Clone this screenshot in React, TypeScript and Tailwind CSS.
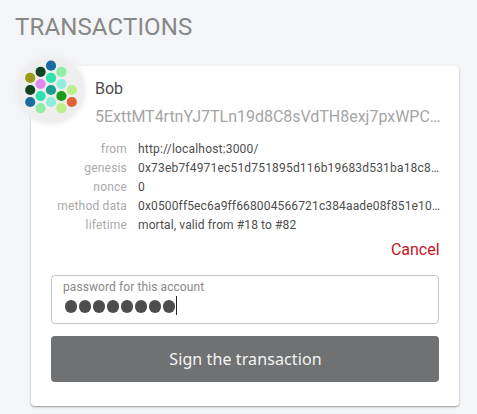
const dots: [number, number, string][] = [
  [33, 8.7, '#1a6b9f'],
  [22.6, 14.8, '#10421f'],
  [43.4, 14.8, '#91eda6'],
  [12.2, 20.9, '#9b9a19'],
  [33, 20.9, '#2fe2ad'],
  [22.6, 27, '#e08af0'],
  [43.4, 27, '#91eede'],
  [53.8, 33, '#bdf08b'],
  [12.2, 33, '#10421f'],
  [33, 33, '#1b9d90'],
  [22.6, 39, '#2fe2ad'],
  [43.4, 39, '#1a9c19'],
  [12.2, 45, '#1a6b9f'],
  [33, 45, '#91eede'],
  [53.8, 45, '#e26033'],
  [22.6, 51.2, '#91eda6'],
  [43.4, 51.2, '#bdf08b'],
];

const details = [
  ['from', 'http://localhost:3000/'],
  ['genesis', '0x73eb7f4971ec51d751895d116b19683d531ba18c8…'],
  ['nonce', '0'],
  ['method data', '0x0500ff5ec6a9ff668004566721c384aade08f851e10…'],
  ['lifetime', 'mortal, valid from #18 to #82'],
];

function Identicon() {
  return (
    <svg
      viewBox="0 0 66 66"
      className="absolute -left-[13px] -top-[9px] h-[66px] w-[66px] rounded-full bg-[#eeeeee] shadow-[0_0_5px_2px_#eeeeee]"
    >
      {dots.map(([x, y, color]) => (
        <circle key={`${x}-${y}`} cx={x} cy={y} r="5.1" fill={color} />
      ))}
    </svg>
  );
}

export default function App() {
  return (
    <main className="h-[414px] w-[477px] overflow-hidden bg-[#f4f5f8] pt-[11px] font-['Roboto',sans-serif] text-[#4d4d4d]">
      <h1 className="ml-[15px] h-[55px] text-[24px] leading-8 tracking-[0.14px] text-[#878786]">TRANSACTIONS</h1>
      <section className="relative ml-[31px] h-[340px] w-[428px] rounded-[4px] bg-white px-5 pt-[9px] shadow-[0_1px_2px_0_rgba(0,0,0,0.4)]">
        <Identicon />
        <header className="ml-11 whitespace-nowrap text-[16px]">
          <div className="h-7 leading-7">Bob</div>
          <div className="h-7 leading-7 tracking-[-0.02px] text-[#a5a5a5]">5ExttMT4rtnYJ7TLn19d8C8sVdTH8exj7pxWPC…</div>
        </header>
        <dl className="mt-[9px] grid grid-cols-[76px_1fr] gap-x-[11px] whitespace-nowrap text-[12px] leading-[19px]">
          {details.map(([label, value]) => (
            <div key={label} className="contents">
              <dt className="flex justify-end tracking-[0.18px] text-[#aaaaaa]">{label}</dt>
              <dd className={value.startsWith('0x73') ? 'tracking-[0.19px]' : value.startsWith('h') ? 'tracking-[0.18px]' : value.startsWith('0x') ? 'tracking-[0.15px]' : 'tracking-[0.11px]'}>
                {value}
              </dd>
            </div>
          ))}
        </dl>
        <div className="flex h-[40px] justify-end pt-[3px]">
          <button className="-mr-[0.6px] h-6 text-[16px] leading-6 text-[#c4161c]">Cancel</button>
        </div>
        <div className="h-[49px] rounded-[4px] border border-[#c6c6c6] pl-[11px] pt-[3px]">
          <div className="h-4 text-[12px] leading-4 tracking-[0.09px] text-[#898989]">password for this account</div>
          <div className="flex h-5 items-start">
            <div className="flex gap-[1.5px] pl-[1.7px] pt-[5px]">
              {Array.from({ length: 8 }, (_, i) => (
                <span key={i} className="h-[12.5px] w-[12.5px] rounded-full bg-[#4d4d4d]" />
              ))}
            </div>
            <span className="ml-[0.8px] mt-px h-[19px] w-px bg-[#252525]" />
          </div>
        </div>
        <button className="mt-3 h-[46px] w-full rounded-[4px] bg-[#707172] pl-px font-['Noto_Sans',sans-serif] text-[16px] tracking-[0.1px] text-[#f4f4f4]">
          Sign the transaction
        </button>
      </section>
    </main>
  );
}
